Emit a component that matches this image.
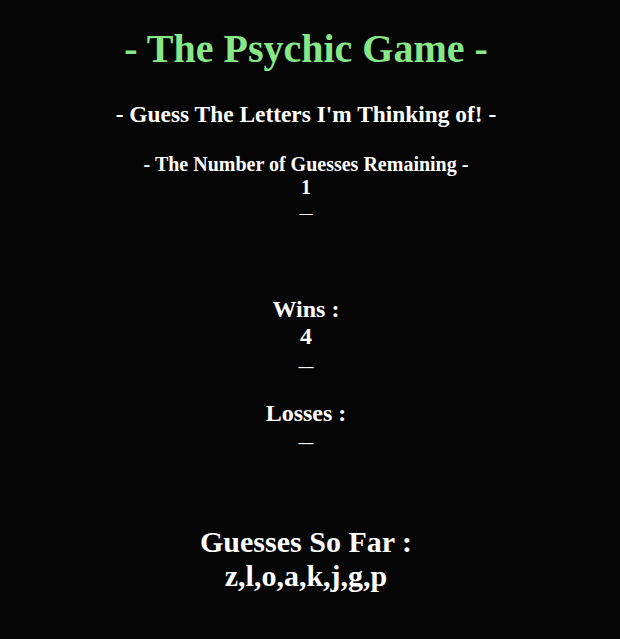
const App = () => {
    const guesses = ["z", "l", "o", "a", "k", "j", "g", "p"];

    return (
        <div className="min-h-[639px] bg-[#050505] pr-[8px] text-white text-center font-bold" style={{ fontFamily: '"Liberation Serif", "Times New Roman", serif' }}>
            <div className="pt-[25px]">
                <h1 className="text-[40px] leading-[48px] text-[#88e788]">- The Psychic Game -</h1>
                <h2 className="mt-[26px] text-[23.4px] leading-[30px]">- Guess The Letters I'm Thinking of! -</h2>
            </div>

            <div className="mt-[24px] text-[20px] leading-[23px]">
                <h3>- The Number of Guesses Remaining -</h3>
                <div>1</div>
                <div className="text-[13px] leading-[19px]">__</div>
            </div>

            <div className="mt-[78px] text-[24px] leading-[27px]">
                <h3>Wins :</h3>
                <div>4</div>
                <div className="text-[15px] leading-[22px]">__</div>
            </div>

            <div className="mt-[28px] text-[24px] leading-[27px]">
                <h3>Losses :</h3>
                <div className="text-[15px] leading-[20px]">__</div>
            </div>

            <div className="mt-[77px] text-[30px] leading-[36px]">
                <h2>Guesses So Far :</h2>
                <div className="leading-[31px]">{guesses.join(",")}</div>
            </div>
        </div>
    )
}

export default App
